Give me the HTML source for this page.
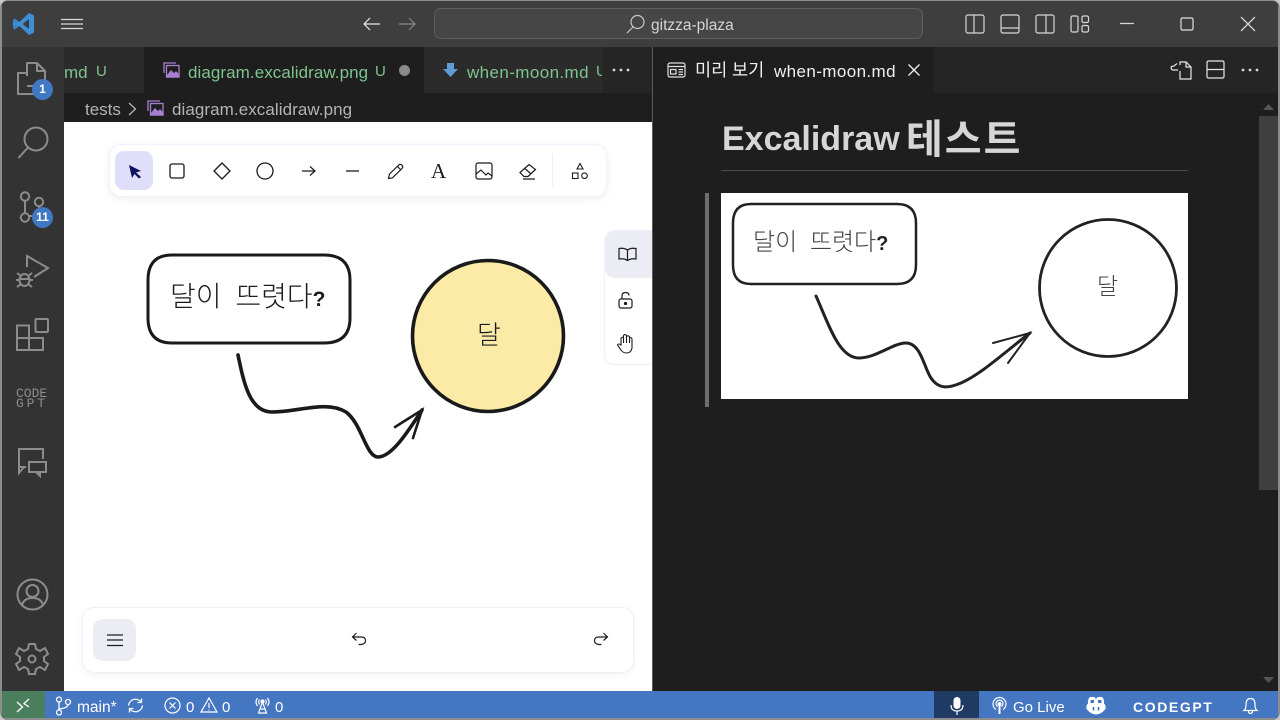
<!DOCTYPE html>
<html lang="ko"><head><meta charset="utf-8"><style>
html,body{margin:0;padding:0;width:1280px;height:720px;overflow:hidden;background:#c8c8c8}
*{box-sizing:border-box}
body{font-family:"Liberation Sans","Noto Sans CJK KR",sans-serif}
.a{position:absolute}
.t{position:absolute;white-space:nowrap;line-height:1}
svg{position:absolute;overflow:visible;fill:none}
#w{position:absolute;left:0;top:0;width:1280px;height:720px;overflow:hidden;border-radius:8px;background:#1e1e1e;border:1px solid #8d8d8d;border-bottom:0}
#root{position:absolute;left:-1px;top:-1px;width:1280px;height:720px}
.g{color:#7fc48e}
</style></head><body>
<div id="w"><div id="root">
<!-- title bar -->
<div class="a" style="left:0;top:0;width:1280px;height:47px;background:#3e3e3e"></div>
<svg style="left:12px;top:12px" width="24" height="24" viewBox="0 0 24 24"><path d="M17 1 L22 3.500 V20.500 L17 23 L7.500 14 L3 17.500 L1 16 V8 L3 6.500 L7.500 10 Z" fill="#3f8fd6"/><path d="M17 7 L10.500 12 L17 17 Z" fill="#3e3e3e"/><path d="M1 8 L3 6.500 L6 9.500 L3 12 L6 14.500 L3 17.500 L1 16 L4 12Z" fill="#3a7fc0"/></svg>
<svg style="left:61px;top:18px" width="22" height="12" stroke="#d8d8d8" stroke-width="1.200"><path d="M0 1.500H22M0 6H22M0 10.500H22"/></svg>
<svg style="left:363px;top:17px" width="18" height="14" stroke="#e8e8e8" stroke-width="1.200"><path d="M1 7H17M7 1L1 7L7 13"/></svg>
<svg style="left:398px;top:17px" width="18" height="14" stroke="#8a8a8a" stroke-width="1.200"><path d="M1 7H17M11 1L17 7L11 13"/></svg>
<div class="a" style="left:434px;top:8px;width:489px;height:31px;border:1px solid #5e5e5e;border-radius:7px;background:#464646"></div>
<svg style="left:626px;top:14px" width="20" height="20" stroke="#c8c8c8" stroke-width="1.200"><circle cx="11.500" cy="8" r="6.500"/><path d="M7 13L1 19"/></svg>
<div class="t" style="left:651px;top:18px;font-size:15.500px;color:#d4d4d4">gitzza-plaza</div>
<svg style="left:965px;top:14px" width="20" height="20" stroke="#d8d8d8" stroke-width="1.200"><rect x="1" y="1" width="18" height="18" rx="2"/><path d="M9 1V19"/></svg>
<svg style="left:1000px;top:14px" width="20" height="20" stroke="#d8d8d8" stroke-width="1.200"><rect x="1" y="1" width="18" height="18" rx="2"/><path d="M1 14H19"/></svg>
<svg style="left:1035px;top:14px" width="20" height="20" stroke="#d8d8d8" stroke-width="1.200"><rect x="1" y="1" width="18" height="18" rx="2"/><path d="M11 1V19"/></svg>
<svg style="left:1070px;top:14px" width="20" height="20" stroke="#d8d8d8" stroke-width="1.200"><rect x="1" y="2" width="7" height="16" rx="1.500"/><rect x="12" y="2" width="6.500" height="6.500" rx="1.500"/><rect x="12" y="11.500" width="6.500" height="6.500" rx="1.500"/></svg>
<svg style="left:1119px;top:22px" width="16" height="3" stroke="#d8d8d8" stroke-width="1.200"><path d="M1 1.500H15"/></svg>
<svg style="left:1180px;top:17px" width="14" height="14" stroke="#e0e0e0" stroke-width="1.200"><rect x="1" y="1" width="12" height="12" rx="1.500"/></svg>
<svg style="left:1240px;top:16px" width="16" height="16" stroke="#e8e8e8" stroke-width="1.200"><path d="M1 1L15 15M15 1L1 15"/></svg>

<!-- activity bar -->
<div class="a" style="left:0;top:47px;width:64px;height:644px;background:#333"></div>
<svg style="left:0;top:40px" width="64" height="70" stroke="#8c8c8c" stroke-width="2" stroke-linejoin="round"><path d="M27 36V23H37L45 31V46H27"/><path d="M37 23V31H45"/><path d="M27 33H18V54H35V46"/></svg>
<div class="a" style="left:32px;top:79px;width:21px;height:21px;border-radius:50%;background:#4078c4;color:#fff;font-size:12px;font-weight:bold;text-align:center;line-height:21px">1</div>
<svg style="left:17px;top:126px" width="32" height="34" stroke="#8c8c8c" stroke-width="2"><circle cx="19" cy="13" r="11.500"/><path d="M11 21.500L1.500 32"/></svg>
<svg style="left:18px;top:190px" width="32" height="36" stroke="#8c8c8c" stroke-width="2"><circle cx="7" cy="6.500" r="4.200"/><circle cx="7" cy="27.500" r="4.200"/><circle cx="21" cy="12" r="4.200"/><path d="M7 10.500V23.500M11 26H17Q21 26 21 20V16"/></svg>
<div class="a" style="left:32px;top:207px;width:21px;height:21px;border-radius:50%;background:#4078c4;color:#fff;font-size:12px;font-weight:bold;text-align:center;line-height:21px">11</div>
<svg style="left:15px;top:253px" width="34" height="36" stroke="#8c8c8c" stroke-width="2"><path d="M12 14V3L33 15L19 24"/><ellipse cx="9.500" cy="27" rx="5" ry="6"/><path d="M4.500 26H14.500M2 20L6 23M17 20L13 23M1 27H5M14 27H18M2 34L6 31M17 34L13 31"/></svg>
<svg style="left:16px;top:318px" width="33" height="34" stroke="#8c8c8c" stroke-width="2"><rect x="19.500" y="1" width="12.500" height="13" rx="1"/><path d="M1 7.500H13V32H1ZM1 20H27V32H13"/></svg>
<div class="t" style="left:16px;top:389px;width:34px;font-size:13px;line-height:10px;color:#8c8c8c;font-family:'Liberation Mono',monospace">CODE<br><span style="letter-spacing:2.800px">GPT</span></div>
<svg style="left:17px;top:447px" width="32" height="32" stroke="#8c8c8c" stroke-width="2"><path d="M9 20H2V2H26V12"/><path d="M2 20V26L7 20"/><rect x="12" y="15" width="17" height="10"/><path d="M19 25L23 29V25"/></svg>
<svg style="left:16px;top:578px" width="33" height="33" stroke="#8c8c8c" stroke-width="2"><circle cx="16.500" cy="16.500" r="15"/><circle cx="16.500" cy="13" r="6"/><path d="M6 27Q8 20 16.500 20T27 27"/></svg>
<svg style="left:15px;top:642px" width="34" height="34" viewBox="0 0 34 34" stroke="#8c8c8c" stroke-width="2"><path d="M14 2H20L21 7L25 9L30 6L33 12L29 15V19L33 22L30 28L25 25L21 27L20 32H14L13 27L9 25L4 28L1 22L5 19V15L1 12L4 6L9 9L13 7Z"/><circle cx="17" cy="17" r="3.500"/></svg>

<!-- tabs left -->
<div class="a" style="left:64px;top:47px;width:589px;height:46px;background:#2b2b2b"></div>
<div class="a" style="left:144px;top:47px;width:280px;height:46px;background:#1e1e1e"></div>
<div class="a" style="left:602px;top:47px;width:51px;height:46px;background:#252525"></div>
<div class="t g" style="left:64px;top:64px;font-size:17px">md</div>
<div class="t g" style="left:96px;top:64px;font-size:15px">U</div>
<svg style="left:163px;top:62px" width="17" height="16" stroke="#a77fd0" stroke-width="1.300"><path d="M1 11V1H13"/><rect x="3.500" y="3.500" width="12.500" height="11.500"/><path d="M4 14L8 9L11 12L13 10L16 13V15H4Z" fill="#a77fd0"/></svg>
<div class="t g" style="left:188px;top:64px;font-size:17px;letter-spacing:.07px">diagram.excalidraw.png</div>
<div class="t g" style="left:375px;top:64px;font-size:15px">U</div>
<div class="a" style="left:399px;top:65px;width:11px;height:11px;border-radius:50%;background:#8a8a8a"></div>
<svg style="left:443px;top:62px" width="15" height="16"><path d="M4 1H11V7H15L7.500 15L0 7H4Z" fill="#5f9bd6"/></svg>
<div class="t g" style="left:467px;top:64px;font-size:17px;letter-spacing:.4px">when-moon.md</div>
<div class="a" style="left:596px;top:64px;width:6px;height:15px;overflow:hidden;color:#7fc48e;font-size:15px;line-height:15px">U</div>
<svg style="left:612px;top:68px" width="18" height="4"><circle cx="2" cy="2" r="1.400" fill="#d8d8d8"/><circle cx="9" cy="2" r="1.400" fill="#d8d8d8"/><circle cx="16" cy="2" r="1.400" fill="#d8d8d8"/></svg>
<!-- breadcrumb -->
<div class="a" style="left:64px;top:93px;width:589px;height:29px;background:#1e1e1e"></div>
<div class="t" style="left:85px;top:101px;font-size:17px;color:#b4b4b4">tests</div>
<svg style="left:128px;top:102px" width="9" height="14" stroke="#b4b4b4" stroke-width="1.300"><path d="M1 1L7.500 7L1 13"/></svg>
<svg style="left:147px;top:100px" width="17" height="16" stroke="#a77fd0" stroke-width="1.300"><path d="M1 11V1H13"/><rect x="3.500" y="3.500" width="12.500" height="11.500"/><path d="M4 14L8 9L11 12L13 10L16 13V15H4Z" fill="#a77fd0"/></svg>
<div class="t" style="left:172px;top:101px;font-size:17px;letter-spacing:.07px;color:#b4b4b4">diagram.excalidraw.png</div>

<!-- editor white -->
<div class="a" style="left:64px;top:122px;width:589px;height:569px;background:#fff"></div>
<!-- toolbar -->
<div class="a" style="left:109px;top:144px;width:498px;height:53px;background:#fff;border-radius:12px;border:1px solid #f1f0ff;box-shadow:0 2px 8px rgba(0,0,0,.07)"></div>
<div class="a" style="left:115px;top:151px;width:38px;height:39px;background:#e0dffa;border-radius:9px"></div>
<svg style="left:128px;top:164px" width="14" height="15"><path d="M1 1L13 7L8 8.500L13 13L11 14.500L6.500 10L4 14Z" fill="#0e1060"/></svg>
<svg style="left:169px;top:163px" width="16" height="16" stroke="#1b1b1f" stroke-width="1.300"><rect x="1" y="1" width="14" height="14" rx="2"/></svg>
<svg style="left:213px;top:162px" width="18" height="18" stroke="#1b1b1f" stroke-width="1.300"><path d="M9 1L17 9L9 17L1 9Z" stroke-linejoin="round"/></svg>
<svg style="left:256px;top:162px" width="18" height="18" stroke="#1b1b1f" stroke-width="1.300"><circle cx="9" cy="9" r="8"/></svg>
<svg style="left:301px;top:165px" width="15" height="12" stroke="#1b1b1f" stroke-width="1.200"><path d="M1 6H14M9 1.500L14 6L9 10.500"/></svg>
<svg style="left:345px;top:170px" width="15" height="2" stroke="#1b1b1f" stroke-width="1.300"><path d="M1 1H14"/></svg>
<svg style="left:387px;top:163px" width="17" height="17" stroke="#1b1b1f" stroke-width="1.200"><path d="M1.500 15.500L2.500 11L12 1.800Q13.500 .8 15 2.200T15 5.500L5.500 14.800ZM10.500 3.500L13.500 6.500"/></svg>
<div class="t" style="left:431px;top:161px;font-size:21px;font-family:'Liberation Serif',serif;color:#1b1b1f">A</div>
<svg style="left:475px;top:162px" width="18" height="18" stroke="#1b1b1f" stroke-width="1.200"><rect x="1" y="1" width="16" height="16" rx="2"/><path d="M1 12L6 8L11 13L13 11L17 14M12.500 5.500V5.600"/></svg>
<svg style="left:519px;top:163px" width="18" height="17" stroke="#1b1b1f" stroke-width="1.200"><path d="M1 9.500L10 1.500L16.500 6.500L9 13.500H5ZM6 5.500L12 11M4 16H16"/></svg>
<div class="a" style="left:552px;top:154px;width:1px;height:33px;background:#eeeef8"></div>
<svg style="left:571px;top:162px" width="18" height="18" stroke="#1b1b1f" stroke-width="1.100"><path d="M9 1.500L12 7H6Z"/><rect x="1.500" y="11" width="5.500" height="5.500"/><circle cx="13.500" cy="13.700" r="2.800"/></svg>
<!-- right side tools -->
<div class="a" style="left:604px;top:230px;width:60px;height:135px;background:#fff;border-radius:10px;border:1px solid #f1f0ff"></div>
<div class="a" style="left:605px;top:231px;width:47px;height:47px;background:#ececf4;border-radius:10px 0 0 10px"></div>
<svg style="left:618px;top:247px" width="19" height="15" stroke="#1b1b1f" stroke-width="1.200"><path d="M9.500 3Q6 .5 1 1.500V12Q6 11 9.500 13.500Q13 11 18 12V1.500Q13 .5 9.500 3ZM9.500 3V13.500"/></svg>
<svg style="left:617px;top:291px" width="17" height="18" stroke="#1b1b1f" stroke-width="1.200"><rect x="2" y="8" width="13" height="9" rx="2"/><path d="M5 8V5Q5 1.500 8.500 1.500T12 4.500"/><circle cx="8.500" cy="12.500" r="1" fill="#1b1b1f"/></svg>
<svg style="left:616px;top:333px" width="19" height="21" stroke="#1b1b1f" stroke-width="1.100"><path d="M5 12V5Q6.500 3.500 7.500 5V2.500Q9 .5 10.500 2.500V3.500Q12 2 13.500 3.500V5Q15.500 4 16 6V15Q15 20 10.500 20Q7 20 5 17L1.500 12Q2.500 10 5 12ZM7.500 5V10M10.500 3V10M13.500 4V10"/></svg>
<!-- bottom bar -->
<div class="a" style="left:82px;top:607px;width:552px;height:66px;background:#fff;border-radius:12px;border:1px solid #f1f0f4;box-shadow:0 2px 8px rgba(0,0,0,.05)"></div>
<div class="a" style="left:93px;top:619px;width:43px;height:42px;background:#ececf4;border-radius:10px"></div>
<svg style="left:106px;top:633px" width="17" height="14" stroke="#1b1b1f" stroke-width="1.300"><path d="M1 2H17M1 7H17M1 12.500H17"/></svg>
<svg style="left:351px;top:632px" width="16" height="14" stroke="#1b1b1f" stroke-width="1.200"><path d="M5.500 1L1.500 5L5.500 8.500M1.500 5H10Q14.500 5 14.500 8.500T10 12.500H7.500"/></svg>
<svg style="left:593px;top:632px" width="16" height="14" stroke="#1b1b1f" stroke-width="1.200"><path d="M10.500 1L14.500 5L10.500 8.500M14.500 5H6Q1.500 5 1.500 8.500T6 12.500H8.500"/></svg>
<!-- drawing -->
<svg style="left:64px;top:122px" width="588" height="569" stroke="#1a1a1a" stroke-linecap="round">
<path d="M108 133H260Q286 133 286 158V196Q286 221 260 221H108Q84 221 84 196V158Q84 133 108 133Z" stroke-width="3" fill="#fff"/>
<circle cx="424" cy="214" r="75.500" fill="#fbeba6" stroke-width="3.600"/>
<path d="M424 138A76.500 76.500 0 0 1 474 157" stroke-width="2"/>
<path d="M174 233C180 262 186 290 208 290C235 290 262 278 282 290C298 302 302 335 314 335C328 335 345 308 358 288" stroke-width="3.600"/>
<path d="M331 305L358 288L349 316" stroke-width="2.600"/>
</svg>
<div class="t" style="left:170px;top:278px;font-size:28px;line-height:34px;word-spacing:6px;color:#1b1b1f;font-family:'Noto Sans CJK KR',sans-serif;font-weight:300">달이 뜨렷다<span style="font-weight:700;font-size:21px;font-family:'Liberation Sans',sans-serif">?</span></div>
<div class="t" style="left:477px;top:318px;font-size:26px;line-height:32px;color:#1b1b1f;font-family:'Noto Sans CJK KR',sans-serif;font-weight:300">달</div>

<!-- right pane -->
<div class="a" style="left:652px;top:47px;width:1px;height:644px;background:#5a5a5a"></div>
<div class="a" style="left:653px;top:47px;width:627px;height:46px;background:#252525"></div>
<div class="a" style="left:653px;top:47px;width:280px;height:46px;background:#1e1e1e"></div>
<div class="a" style="left:653px;top:93px;width:627px;height:598px;background:#1e1e1e"></div>
<svg style="left:667px;top:62px" width="19" height="16" stroke="#e0e0e0" stroke-width="1.200"><rect x="1" y="1" width="17" height="14" rx="2"/><path d="M1 4.500H18M3.500 7.500H9V12H3.500ZM11.500 7.500H16M11.500 10H16M11.500 12.500H16"/></svg>
<div class="t" style="left:695px;top:61px;font-size:17.500px;line-height:18px;color:#f0f0f0">미리 보기</div>
<div class="t" style="left:774px;top:63px;font-size:17px;line-height:18px;letter-spacing:.4px;color:#f0f0f0">when-moon.md</div>
<svg style="left:908px;top:64px" width="12" height="12" stroke="#f0f0f0" stroke-width="1.300"><path d="M.5 .5L11.500 11.500M11.500 .5L.5 11.500"/></svg>
<svg style="left:1170px;top:60px" width="22" height="20" stroke="#e8e8e8" stroke-width="1.200"><path d="M10 11V19H21V7L16 2H10V5"/><path d="M16 2V7H21M7 3.500L4 6L1.500 6.500Q.5 8.500 2.500 10H8"/></svg>
<svg style="left:1206px;top:60px" width="19" height="19" stroke="#e8e8e8" stroke-width="1.200"><rect x="1" y="1" width="17" height="17" rx="1.500"/><path d="M1 9.500H18"/></svg>
<svg style="left:1241px;top:68px" width="18" height="4"><circle cx="2" cy="2" r="1.400" fill="#d8d8d8"/><circle cx="9" cy="2" r="1.400" fill="#d8d8d8"/><circle cx="16" cy="2" r="1.400" fill="#d8d8d8"/></svg>
<div class="a" style="left:1259px;top:116px;width:19px;height:374px;background:#3f3f3f"></div>
<svg style="left:1263px;top:104px" width="11" height="6"><path d="M5.500 0L11 6H0Z" fill="#555"/></svg>
<svg style="left:1263px;top:677px" width="11" height="6"><path d="M0 0H11L5.500 6Z" fill="#555"/></svg>
<div class="t" style="left:722px;top:118px;font-size:34px;line-height:42px;font-weight:700;color:#d6d6d6">Excalidraw</div>
<div class="t" style="left:906px;top:112px;font-size:40px;line-height:48px;letter-spacing:2px;font-weight:700;color:#d6d6d6;font-family:'Noto Sans CJK KR',sans-serif">테스트</div>
<div class="a" style="left:721px;top:170px;width:467px;height:1px;background:#4a4a4a"></div>
<div class="a" style="left:705px;top:193px;width:4px;height:214px;background:#6e6e6e"></div>
<div class="a" style="left:721px;top:193px;width:467px;height:206px;background:#fff"></div>
<svg style="left:721px;top:193px" width="467" height="206" stroke="#222" stroke-linecap="round">
<path d="M30 11H176Q195 11 195 30V72Q195 91 176 91H30Q12 91 12 72V30Q12 11 30 11Z" stroke-width="2.500" fill="#fff"/>
<circle cx="387" cy="95" r="68.500" stroke-width="2.800"/>
<path d="M95 103C108 132 118 165 138 165C155 165 172 150 185 150C200 150 203 175 210 185C218 197 228 195 240 190C262 180 285 158 309 140" stroke-width="3"/>
<path d="M272 150L309 140L287 170" stroke-width="2"/>
</svg>
<div class="t" style="left:753px;top:225px;font-size:24px;line-height:30px;word-spacing:6px;color:#444;font-family:'Noto Sans CJK KR',sans-serif;font-weight:300">달이 뜨렷다<span style="font-weight:700;font-size:20px;color:#222;font-family:'Liberation Sans',sans-serif">?</span></div>
<div class="t" style="left:1097px;top:269px;font-size:23px;line-height:30px;color:#444;font-family:'Noto Sans CJK KR',sans-serif;font-weight:300">달</div>

<!-- status bar -->
<div class="a" style="left:0;top:691px;width:1280px;height:29px;background:#4476c1"></div>
<div class="a" style="left:2px;top:691px;width:43px;height:29px;background:#4a7f5e"></div>
<svg style="left:16px;top:698px" width="14" height="15" stroke="#fff" stroke-width="1.300"><path d="M1 4L6.500 9L1 14M13 1L8 5.500L13 9"/></svg>
<svg style="left:55px;top:696px" width="16" height="20" stroke="#fff" stroke-width="1.300"><circle cx="4" cy="3.500" r="2.500"/><circle cx="4" cy="16.500" r="2.500"/><circle cx="13" cy="6" r="2.500"/><path d="M4 6V14M13 8.500Q13 12 4 13"/></svg>
<div class="t" style="left:77px;top:700px;font-size:15.500px;color:#fff">main*</div>
<svg style="left:126px;top:697px" width="19" height="17" stroke="#fff" stroke-width="1.300"><path d="M2.500 8.500A7 7 0 0 1 15 5M16.500 8.500A7 7 0 0 1 4 12M15.500 1.500V5.500H11.500M3.500 15.500V11.500H7.500"/></svg>
<svg style="left:164px;top:697px" width="17" height="17" stroke="#fff" stroke-width="1.200"><circle cx="8.500" cy="8.500" r="7.500"/><path d="M5.500 5.500L11.500 11.500M11.500 5.500L5.500 11.500"/></svg>
<div class="t" style="left:186px;top:700px;font-size:15px;color:#fff">0</div>
<svg style="left:200px;top:697px" width="18" height="16" stroke="#fff" stroke-width="1.200"><path d="M9 1L17 15H1ZM9 6V11M9 12.500V13.500"/></svg>
<div class="t" style="left:222px;top:700px;font-size:15px;color:#fff">0</div>
<svg style="left:254px;top:696px" width="17" height="18" stroke="#fff" stroke-width="1.200"><path d="M8.500 6L4.500 17H12.500ZM6 13H11M3.500 2Q.5 6 3.500 10M13.500 2Q16.500 6 13.500 10M5.500 3.500Q4 6 5.500 8.500M11.500 3.500Q13 6 11.500 8.500"/><circle cx="8.500" cy="5.500" r="1.500" fill="#fff"/></svg>
<div class="t" style="left:275px;top:700px;font-size:15px;color:#fff">0</div>
<div class="a" style="left:934px;top:691px;width:45px;height:29px;background:#1f3a63"></div>
<svg style="left:950px;top:697px" width="14" height="19"><rect x="3.500" y="0" width="7" height="12" rx="3.500" fill="#fff"/><path d="M1 8Q1 14 7 14T13 8M7 14V18" stroke="#fff" stroke-width="1.200"/></svg>
<svg style="left:992px;top:697px" width="15" height="18" stroke="#fff" stroke-width="1.200"><path d="M4 12.500A6.500 6.500 0 1 1 11 12.500M5.500 9.500A3.500 3.500 0 1 1 9.500 9.500"/><circle cx="7.500" cy="7" r="1.400" fill="#fff"/><path d="M7.500 9V17" stroke-width="2"/></svg>
<div class="t" style="left:1013px;top:700px;font-size:15px;color:#fff">Go Live</div>
<svg style="left:1086px;top:696px" width="20" height="19"><path d="M4 1H8.500L10 3L11.500 1H16Q18.500 3 18 7.500Q20 9 19.500 13Q15 18.500 10 18.500T.5 13Q0 9 2 7.500Q1.500 3 4 1Z" fill="#fff"/><path d="M4.500 4H8V7H4.500ZM12 4H15.500V7H12Z" fill="#4476c1"/><path d="M7.500 11V14.500M12.500 11V14.500" stroke="#4476c1" stroke-width="1.600"/></svg>
<div class="t" style="left:1133px;top:700px;font-size:14px;font-weight:700;color:#fff;letter-spacing:1.600px">CODEGPT</div>
<svg style="left:1243px;top:697px" width="15" height="18" stroke="#fff" stroke-width="1.200"><path d="M1 13.500Q3 12 3 7.500Q3 1.500 7.500 1.500T12 7.500Q12 12 14 13.500ZM5.500 14Q5.500 16.500 7.500 16.500T9.500 14"/></svg>
<!-- window frame -->
<div class="a" style="left:0;top:0;width:2px;height:720px;background:#8d8d8d"></div>
<div class="a" style="left:1278px;top:0;width:2px;height:720px;background:#8d8d8d"></div>
<div class="a" style="left:0;top:718px;width:1280px;height:2px;background:#8d8d8d"></div>
</div></div>
</body></html>
